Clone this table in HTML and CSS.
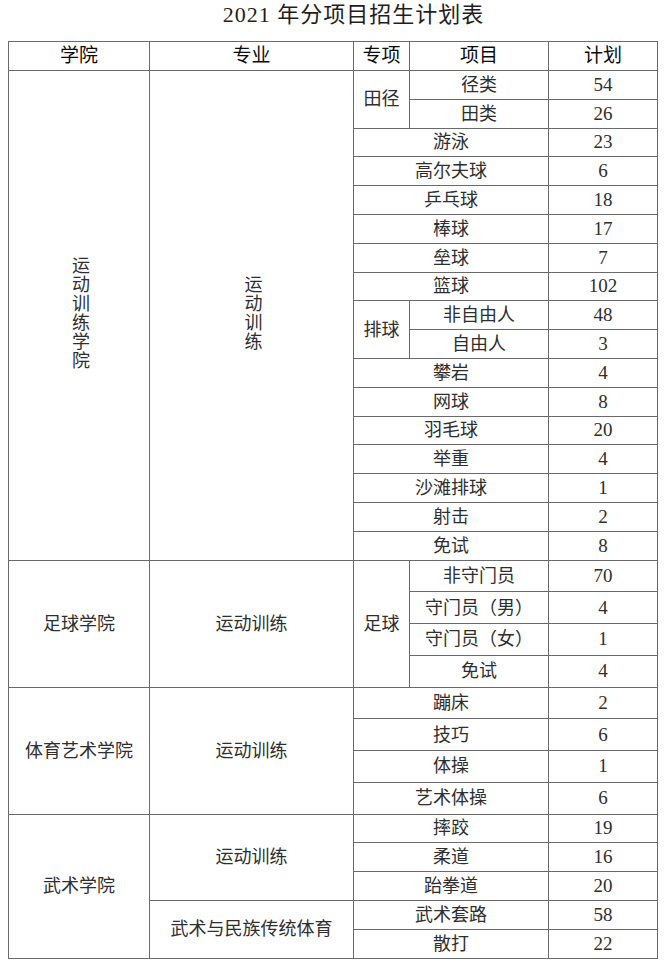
FILE: index.html
```html
<!DOCTYPE html>
<html lang="zh-CN">
<head>
<meta charset="utf-8">
<title>2021 年分项目招生计划表</title>
<link rel="stylesheet" href="styles.css">
</head>
<body>
<div class="page">
  <h1 class="title">2021 年分项目招生计划表</h1>
  <table class="plan">
    <colgroup>
      <col class="c-college">
      <col class="c-major">
      <col class="c-special">
      <col class="c-item">
      <col class="c-plan">
    </colgroup>
    <thead>
      <tr class="r-head">
        <th>学院</th><th>专业</th><th>专项</th><th>项目</th><th>计划</th>
      </tr>
    </thead>
    <tbody>
      <tr class="r-n">
        <td rowspan="17"><span class="vert">运动训练学院</span></td>
        <td rowspan="17"><span class="vert">运动训练</span></td>
        <td rowspan="2">田径</td><td>径类</td><td class="num">54</td>
      </tr>
      <tr class="r-n"><td>田类</td><td class="num">26</td></tr>
      <tr class="r-n"><td colspan="2">游泳</td><td class="num">23</td></tr>
      <tr class="r-n"><td colspan="2">高尔夫球</td><td class="num">6</td></tr>
      <tr class="r-n"><td colspan="2">乒乓球</td><td class="num">18</td></tr>
      <tr class="r-n"><td colspan="2">棒球</td><td class="num">17</td></tr>
      <tr class="r-n"><td colspan="2">垒球</td><td class="num">7</td></tr>
      <tr class="r-n"><td colspan="2">篮球</td><td class="num">102</td></tr>
      <tr class="r-n"><td rowspan="2">排球</td><td>非自由人</td><td class="num">48</td></tr>
      <tr class="r-n"><td>自由人</td><td class="num">3</td></tr>
      <tr class="r-n"><td colspan="2">攀岩</td><td class="num">4</td></tr>
      <tr class="r-n"><td colspan="2">网球</td><td class="num">8</td></tr>
      <tr class="r-n"><td colspan="2">羽毛球</td><td class="num">20</td></tr>
      <tr class="r-n"><td colspan="2">举重</td><td class="num">4</td></tr>
      <tr class="r-n"><td colspan="2">沙滩排球</td><td class="num">1</td></tr>
      <tr class="r-n"><td colspan="2">射击</td><td class="num">2</td></tr>
      <tr class="r-n"><td colspan="2">免试</td><td class="num">8</td></tr>

      <tr class="r-w">
        <td rowspan="4">足球学院</td>
        <td rowspan="4">运动训练</td>
        <td rowspan="4">足球</td><td>非守门员</td><td class="num">70</td>
      </tr>
      <tr class="r-w"><td>守门员（男）</td><td class="num">4</td></tr>
      <tr class="r-w"><td>守门员（女）</td><td class="num">1</td></tr>
      <tr class="r-w"><td>免试</td><td class="num">4</td></tr>

      <tr class="r-w">
        <td rowspan="4">体育艺术学院</td>
        <td rowspan="4">运动训练</td>
        <td colspan="2">蹦床</td><td class="num">2</td>
      </tr>
      <tr class="r-w"><td colspan="2">技巧</td><td class="num">6</td></tr>
      <tr class="r-w"><td colspan="2">体操</td><td class="num">1</td></tr>
      <tr class="r-w"><td colspan="2">艺术体操</td><td class="num">6</td></tr>

      <tr class="r-n">
        <td rowspan="5">武术学院</td>
        <td rowspan="3">运动训练</td>
        <td colspan="2">摔跤</td><td class="num">19</td>
      </tr>
      <tr class="r-n"><td colspan="2">柔道</td><td class="num">16</td></tr>
      <tr class="r-n"><td colspan="2">跆拳道</td><td class="num">20</td></tr>
      <tr class="r-n"><td rowspan="2">武术与民族传统体育</td><td colspan="2">武术套路</td><td class="num">58</td></tr>
      <tr class="r-n"><td colspan="2">散打</td><td class="num">22</td></tr>
    </tbody>
  </table>
</div>
</body>
</html>
```

FILE: styles.css
```css
html, body {
  margin: 0;
  padding: 0;
  background: #ffffff;
}

.page {
  padding: 0 7px 0 8px;
  font-family: "Liberation Serif", "Noto Sans CJK SC", serif;
  color: #2e2e2e;
}

.title {
  margin: 0;
  height: 41px;
  line-height: 30px;
  padding-left: 42px;
  text-align: center;
  font-size: 22px;
  font-weight: normal;
  letter-spacing: 1px;
  color: #1e1e1e;
}

.plan {
  width: 649px;
  border-collapse: collapse;
  table-layout: fixed;
  font-size: 18px;
}

.c-college { width: 141px; }
.c-major { width: 204px; }
.c-special { width: 56px; }
.c-item { width: 139px; }
.c-plan { width: 109px; }

.plan th,
.plan td {
  border: 1px solid #6a6a6a;
  padding: 0;
  text-align: center;
  vertical-align: middle;
  line-height: 20px;
  font-weight: normal;
}

.plan th {
  color: #0a0a0a;
  font-size: 19px;
  font-weight: normal;
}

.r-head { height: 29px; }
.r-n { height: 28.8px; }
.r-w { height: 31.75px; }

.num {
  font-size: 19px;
}

.vert {
  writing-mode: vertical-lr;
  text-orientation: upright;
  line-height: 18px;
  letter-spacing: 1px;
}
```
